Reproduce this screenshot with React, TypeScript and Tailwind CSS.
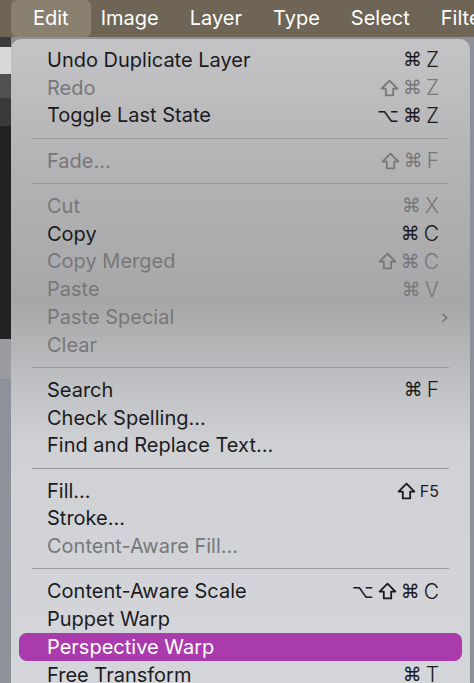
import React from "react"

type Item =
  | { sep: true }
  | { label: string; keys?: string[]; disabled?: boolean; active?: boolean; submenu?: boolean; sep?: false }

const items: Item[] = [
  { label: "Undo Duplicate Layer", keys: ["⌘", "Z"] },
  { label: "Redo", keys: ["⇧", "⌘", "Z"], disabled: true },
  { label: "Toggle Last State", keys: ["⌥", "⌘", "Z"] },
  { sep: true },
  { label: "Fade...", keys: ["⇧", "⌘", "F"], disabled: true },
  { sep: true },
  { label: "Cut", keys: ["⌘", "X"], disabled: true },
  { label: "Copy", keys: ["⌘", "C"] },
  { label: "Copy Merged", keys: ["⇧", "⌘", "C"], disabled: true },
  { label: "Paste", keys: ["⌘", "V"], disabled: true },
  { label: "Paste Special", disabled: true, submenu: true },
  { label: "Clear", disabled: true },
  { sep: true },
  { label: "Search", keys: ["⌘", "F"] },
  { label: "Check Spelling..." },
  { label: "Find and Replace Text..." },
  { sep: true },
  { label: "Fill...", keys: ["⇧", "F5"] },
  { label: "Stroke..." },
  { label: "Content-Aware Fill...", disabled: true },
  { sep: true },
  { label: "Content-Aware Scale", keys: ["⌥", "⇧", "⌘", "C"] },
  { label: "Puppet Warp" },
  { label: "Perspective Warp", active: true },
  { label: "Free Transform", keys: ["⌘", "T"] },
]

function ShiftIcon() {
  return (
    <svg width="19" height="18" viewBox="0 0 18 17" fill="none" stroke="currentColor" strokeWidth="1.7" strokeLinejoin="round">
      <path d="M9 1.5 L16.5 9 H12.5 V15.5 H5.5 V9 H1.5 Z" />
    </svg>
  )
}

function Keys({ keys }: { keys: string[] }) {
  return (
    <span className="flex items-center gap-[4px]">
      {keys.map((k, i) =>
        k === "⇧" ? (
          <ShiftIcon key={i} />
        ) : k === "⌘" || k === "⌥" ? (
          <span key={i} className="font-['DejaVu_Sans',sans-serif] text-[19px] leading-none">
            {k}
          </span>
        ) : (
          <span key={i} className={`font-['Inter',sans-serif] leading-none ${k === "F5" ? "text-[16px] font-normal" : "text-[21px] font-light"}`}>
            {k}
          </span>
        )
      )}
    </span>
  )
}

export default function App() {
  return (
    <div className="h-[683px] w-[474px] overflow-hidden bg-[#8d9199] font-['Inter',sans-serif]">
      {/* Menu bar */}
      <div className="flex h-[37px] items-stretch bg-[#6e6556] pl-[11px] text-[20px] text-white">
        <div className="flex items-center rounded-md bg-[#8a8070] px-[22px] pb-[2px]">Edit</div>
        <div className="ml-[10px] flex items-center gap-[31px] pb-[2px]">
          <span>Image</span>
          <span>Layer</span>
          <span>Type</span>
          <span>Select</span>
          <span>Filter</span>
        </div>
      </div>

      <div className="flex">
        {/* window behind the menu */}
        <div className="flex w-[11px] flex-col">
          <div className="h-[10px] bg-[#3b3b3d]" />
          <div className="h-[27px] bg-[#d8d8d8]" />
          <div className="h-[24px] bg-[#505052]" />
          <div className="h-[28px] bg-[#3a3a3c]" />
          <div className="h-[213px] bg-[#222224]" />
          <div className="h-[40px] bg-[#9a9ca0]" />
          <div className="flex-1 bg-[#8d9199]" />
        </div>

        {/* Edit menu */}
        <div className="mt-[2px] h-[660px] w-[459px] rounded-t-[10px] bg-[linear-gradient(180deg,#c4c4c6_0%,#b3b3b5_20%,#a7a7a9_40%,#bfc0c3_52%,#cfd1d5_62%,#d4d6db_100%)] px-[8px] pt-[7px]">
          {items.map((it, i) =>
            it.sep ? (
              <div key={i} className="flex h-[17.5px] items-center px-[13px]">
                <div className="h-px w-full bg-[#9b9b9e]" />
              </div>
            ) : (
              <div
                key={i}
                className={`flex h-[27.75px] items-center justify-between rounded-[8px] pl-[28px] pr-[23px] text-[20px] ${
                  it.active ? "bg-[#a93bac] text-white" : it.disabled ? "text-[#77777a]" : "text-[#1b1b1d]"
                }`}
              >
                <span>{it.label}</span>
                {it.keys && <Keys keys={it.keys} />}
                {it.submenu && <span className="-mr-[10px] font-['DejaVu_Sans',sans-serif] text-[22px]">›</span>}
              </div>
            )
          )}
        </div>
      </div>
    </div>
  )
}
